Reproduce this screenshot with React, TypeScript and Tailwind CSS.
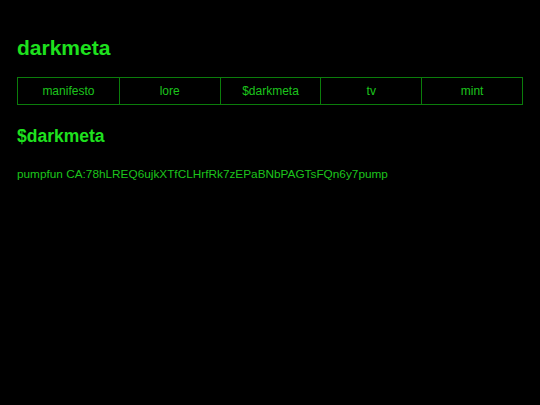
export default function App() {
  const links = ["manifesto", "lore", "$darkmeta", "tv", "mint"]

  return (
    <div className="min-h-[405px] bg-black px-[17px] pt-[35px] font-['Liberation_Sans',Arial,sans-serif]">
      <h1 className="text-[21px] font-bold leading-[26px] text-[#1ee11e]">darkmeta</h1>

      <nav className="mt-[16px] grid grid-cols-5 border border-[#0b7d0b]">
        {links.map((l, i) => (
          <a
            key={l}
            href="#"
            className={`flex h-[26px] items-center justify-center text-[12px] text-[#1cc41c] ${i > 0 ? "border-l border-[#0b7d0b]" : ""}`}
          >
            {l}
          </a>
        ))}
      </nav>

      <h2 className="mt-[20px] text-[17.5px] font-bold leading-[22px] text-[#1ee11e]">$darkmeta</h2>

      <p className="mt-[19px] text-[11.8px] leading-[16px] text-[#1cc41c]">
        pumpfun CA:78hLREQ6ujkXTfCLHrfRk7zEPaBNbPAGTsFQn6y7pump
      </p>
    </div>
  )
}
